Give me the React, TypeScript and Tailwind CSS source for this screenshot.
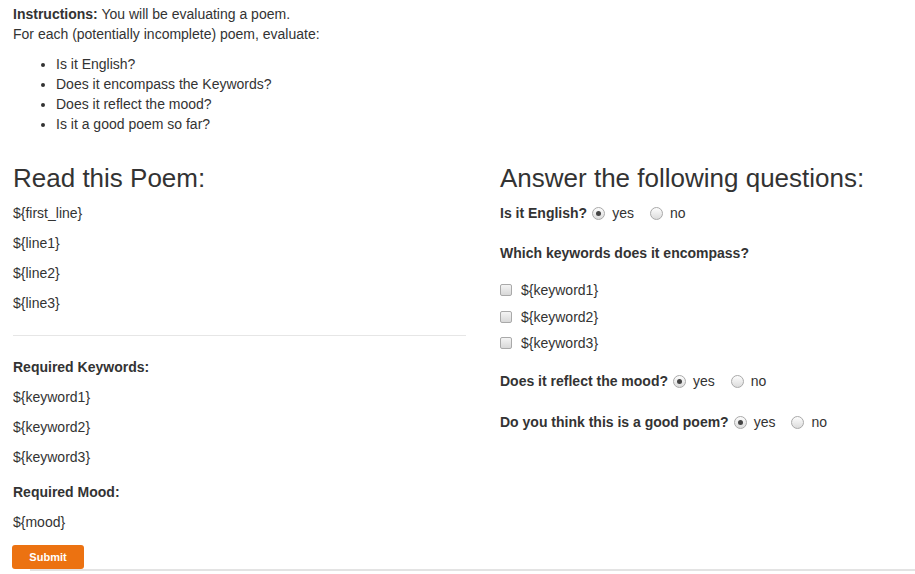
import React from "react";

function Radio({ checked }: { checked?: boolean }) {
  return (
    <span className="flex h-[13px] w-[13px] items-center justify-center rounded-full border border-[#a9a9a9] bg-gradient-to-b from-[#fdfdfd] to-[#dcdcdc]">
      {checked && <span className="h-[5px] w-[5px] rounded-full bg-[#444]" />}
    </span>
  );
}

function Check() {
  return <span className="block h-[12px] w-[12px] rounded-[2px] border border-[#a9a9a9] bg-gradient-to-b from-[#f4f4f4] to-[#d8d8d8]" />;
}

function YesNo() {
  return (
    <span className="flex items-center">
      <span className="ml-[5px] flex"><Radio checked /></span>
      <span className="ml-[7px] font-normal">yes</span>
      <span className="ml-[16px] flex"><Radio /></span>
      <span className="ml-[7px] font-normal">no</span>
    </span>
  );
}

export default function App() {
  return (
    <div className="relative h-[574px] w-[915px] overflow-hidden bg-white pt-[4px] text-[14px] leading-[20px] text-[#333]" style={{ fontFamily: '"Liberation Sans", Arial, sans-serif' }}>
      <div className="pl-[13px]">
        <div><b>Instructions:</b> You will be evaluating a poem.</div>
        <div>For each (potentially incomplete) poem, evaluate:</div>
        <ul className="mt-[10px] list-disc pl-[43px]">
          <li>Is it English?</li>
          <li>Does it encompass the Keywords?</li>
          <li>Does it reflect the mood?</li>
          <li>Is it a good poem so far?</li>
        </ul>
      </div>
      <div className="mt-[30px] flex">
        <div className="ml-[13px] w-[453px]">
          <h2 className="text-[26px] leading-[29px]">Read this Poem:</h2>
          <div className="mt-[10px] flex flex-col gap-[10px]">
            <p>{"${first_line}"}</p>
            <p>{"${line1}"}</p>
            <p>{"${line2}"}</p>
            <p>{"${line3}"}</p>
          </div>
          <div className="mt-[22px] h-px bg-[#e6e6e6]" />
          <div className="mt-[21px] font-bold">Required Keywords:</div>
          <div className="mt-[10px] flex flex-col gap-[10px]">
            <p>{"${keyword1}"}</p>
            <p>{"${keyword2}"}</p>
            <p>{"${keyword3}"}</p>
          </div>
          <div className="mt-[15px] font-bold">Required Mood:</div>
          <p className="mt-[10px]">{"${mood}"}</p>
          <button className="-ml-px mt-[13px] flex h-[24px] w-[72px] items-center justify-center rounded-[3px] bg-[#ec7211] text-[11px] font-bold text-white">Submit</button>
        </div>
        <div className="ml-[34px] flex-1">
          <h2 className="text-[26px] leading-[29px]">Answer the following questions:</h2>
          <div className="mt-[10px] flex items-center font-bold">Is it English?<YesNo /></div>
          <div className="mt-[20px] font-bold">Which keywords does it encompass?</div>
          <div className="mt-[17px] flex flex-col">
            {["${keyword1}", "${keyword2}", "${keyword3}"].map((k, i) => (
              <div key={k} className={`flex h-[20px] items-center ${i > 0 ? "mt-[6.5px]" : ""}`}>
                <Check />
                <span className="ml-[9px]">{k}</span>
              </div>
            ))}
          </div>
          <div className="mt-[18px] flex items-center font-bold">Does it reflect the mood?<YesNo /></div>
          <div className="mt-[21px] flex items-center font-bold">Do you think this is a good poem?<YesNo /></div>
        </div>
      </div>
      <div className="ml-[30px] h-[2px] bg-[#e3e3e3]" />
    </div>
  );
}
